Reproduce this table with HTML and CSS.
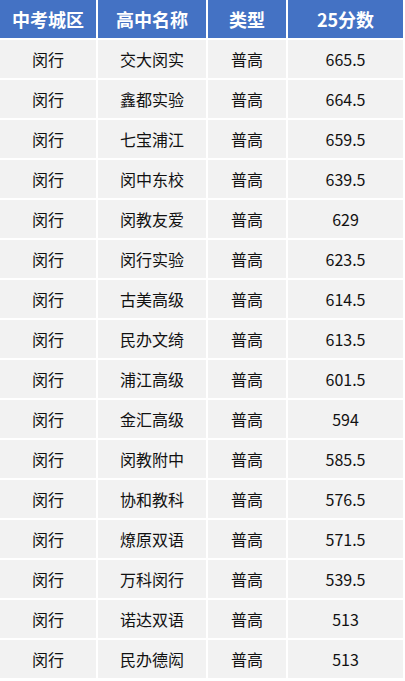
FILE: index.html
```html
<!DOCTYPE html>
<html lang="zh-CN">
<head>
<meta charset="utf-8">
<link rel="stylesheet" href="styles.css">
</head>
<body>
<div class="table">
  <div class="hd">中考城区</div><div class="hd">高中名称</div><div class="hd">类型</div><div class="hd">25分数</div>
  <div class="c">闵行</div><div class="c">交大闵实</div><div class="c">普高</div><div class="c num">665.5</div>
  <div class="c">闵行</div><div class="c">鑫都实验</div><div class="c">普高</div><div class="c num">664.5</div>
  <div class="c">闵行</div><div class="c">七宝浦江</div><div class="c">普高</div><div class="c num">659.5</div>
  <div class="c">闵行</div><div class="c">闵中东校</div><div class="c">普高</div><div class="c num">639.5</div>
  <div class="c">闵行</div><div class="c">闵教友爱</div><div class="c">普高</div><div class="c num">629</div>
  <div class="c">闵行</div><div class="c">闵行实验</div><div class="c">普高</div><div class="c num">623.5</div>
  <div class="c">闵行</div><div class="c">古美高级</div><div class="c">普高</div><div class="c num">614.5</div>
  <div class="c">闵行</div><div class="c">民办文绮</div><div class="c">普高</div><div class="c num">613.5</div>
  <div class="c">闵行</div><div class="c">浦江高级</div><div class="c">普高</div><div class="c num">601.5</div>
  <div class="c">闵行</div><div class="c">金汇高级</div><div class="c">普高</div><div class="c num">594</div>
  <div class="c">闵行</div><div class="c">闵教附中</div><div class="c">普高</div><div class="c num">585.5</div>
  <div class="c">闵行</div><div class="c">协和教科</div><div class="c">普高</div><div class="c num">576.5</div>
  <div class="c">闵行</div><div class="c">燎原双语</div><div class="c">普高</div><div class="c num">571.5</div>
  <div class="c">闵行</div><div class="c">万科闵行</div><div class="c">普高</div><div class="c num">539.5</div>
  <div class="c">闵行</div><div class="c">诺达双语</div><div class="c">普高</div><div class="c num">513</div>
  <div class="c">闵行</div><div class="c">民办德闳</div><div class="c">普高</div><div class="c num">513</div>
</div>
</body>
</html>
```
FILE: styles.css
```css
html, body {
  margin: 0;
  padding: 0;
  background: #ffffff;
}
.table {
  display: grid;
  grid-template-columns: 96px 108px 78px 115px;
  grid-auto-rows: 38px;
  gap: 2px;
  width: 403px;
  font-family: "Noto Sans CJK SC", "Noto Sans", sans-serif;
}
.hd {
  background: #4472c4;
  color: #ffffff;
  font-weight: 700;
  font-size: 18px;
  display: flex;
  align-items: center;
  justify-content: center;
}
.c {
  background: #f2f2f2;
  color: #111111;
  font-size: 16px;
  display: flex;
  align-items: center;
  justify-content: center;
}
```
